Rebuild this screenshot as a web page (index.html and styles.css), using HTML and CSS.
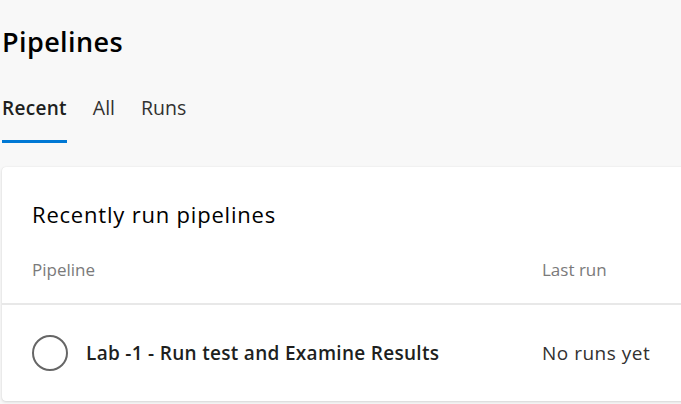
FILE: index.html
```html
<!DOCTYPE html>
<html>
<head>
<meta charset="utf-8">
<link rel="stylesheet" href="styles.css">
</head>
<body>
<div class="page">
  <h1 class="title">Pipelines</h1>
  <nav class="tabs">
    <div class="tab active">Recent</div>
    <div class="tab">All</div>
    <div class="tab">Runs</div>
  </nav>
  <section class="card">
    <h2 class="card-title">Recently run pipelines</h2>
    <div class="head-row">
      <div class="col-name">Pipeline</div>
      <div class="col-last">Last run</div>
    </div>
    <div class="row">
      <div class="col-name name-cell">
        <span class="status"></span>
        <span class="name">Lab -1 - Run test and Examine Results</span>
      </div>
      <div class="col-last last-cell">No runs yet</div>
    </div>
  </section>
</div>
</body>
</html>
```
FILE: styles.css
```css
html, body { margin: 0; padding: 0; }
body {
  background: #f8f8f8;
  font-family: "Open Sans", "Noto Sans", sans-serif;
  color: #201f1e;
  width: 681px;
  height: 404px;
  overflow: hidden;
}
.page { padding: 0 0 0 2px; }
.title {
  margin: 0;
  padding: 24px 0 0 0;
  font-size: 27px;
  font-weight: 600;
  line-height: 36px;
  letter-spacing: 0.4px;
  color: #000;
}
.tabs {
  display: flex;
  gap: 26px;
  margin-top: 35px;
}
.tab {
  font-size: 19.5px;
  line-height: 26px;
  padding: 0 0 22px 0;
  color: #323130;
}
.tab.active {
  font-weight: 600;
  font-size: 19px;
  letter-spacing: 0.3px;
  border-bottom: 3px solid #0078d4;
  padding-bottom: 19px;
  color: #201f1e;
}
.card {
  margin-top: 24px;
  background: #fff;
  border-radius: 4px 0 0 4px;
  box-shadow: 0 1px 3px rgba(0,0,0,0.14), 0 0 1px rgba(0,0,0,0.1);
  margin-right: -10px;
}
.card-title {
  margin: 0;
  padding: 32px 0 0 30px;
  font-size: 22px;
  font-weight: 400;
  line-height: 30px;
  letter-spacing: 0.8px;
  color: #000;
}
.head-row {
  display: flex;
  padding: 30px 0 22px 30px;
  font-size: 17px;
  line-height: 22px;
  color: #7a7a7a;
  border-bottom: 2px solid #e8e8e8;
}
.col-name { width: 510px; }
.col-last { flex: 1; }
.row {
  display: flex;
  align-items: center;
  height: 96px;
  padding-left: 30px;
}
.name-cell { display: flex; align-items: center; gap: 18px; }
.status {
  width: 36px;
  height: 36px;
  border: 2px solid #666;
  border-radius: 50%;
  box-sizing: border-box;
  flex: none;
}
.name {
  font-size: 19px;
  font-weight: 600;
  letter-spacing: 0.3px;
  color: #201f1e;
}
.last-cell {
  font-size: 19px;
  letter-spacing: 0.5px;
  color: #323130;
}
```
